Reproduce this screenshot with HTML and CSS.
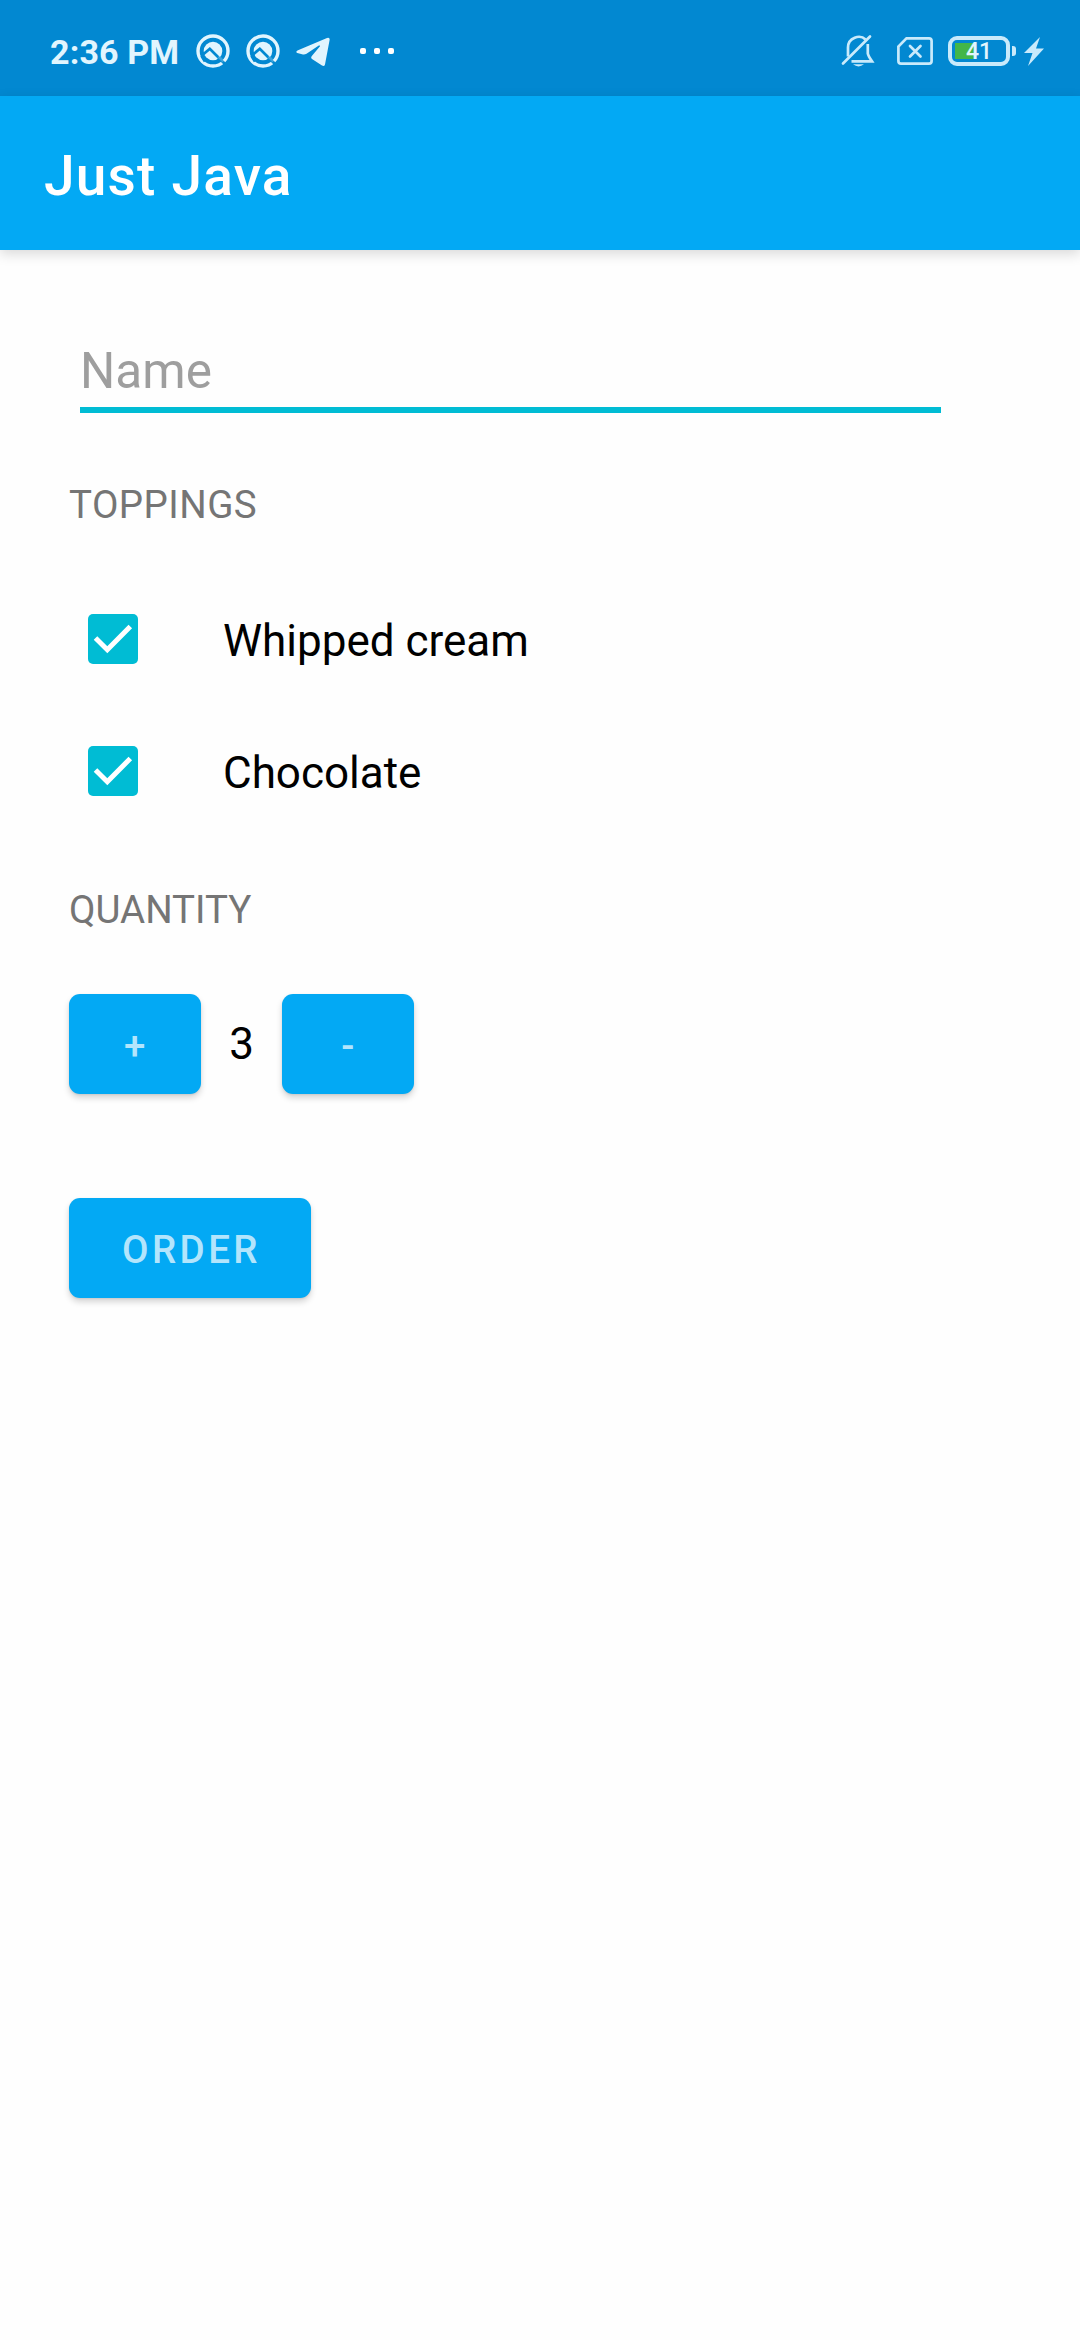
FILE: index.html
```html
<!DOCTYPE html>
<html lang="en">
<head>
<meta charset="utf-8">
<title>Just Java</title>
<link rel="stylesheet" href="styles.css">
</head>
<body>
<svg class="defs" aria-hidden="true">
  <symbol id="q" viewBox="0 0 34 34">
    <circle cx="17" cy="17" r="15" fill="none" stroke="currentColor" stroke-width="3.400"/>
    <circle cx="17" cy="17" r="9.300" fill="currentColor"/>
    <path d="M5.500 21.800 13.800 14.800 30.500 31.500M9 27.500 5.500 21.800" fill="none" stroke="#0288d1" stroke-width="2.800"/>
    <path d="M22.500 22.500 27.500 27.500" stroke="currentColor" stroke-width="2.600" opacity=".25"/>
  </symbol>
  <symbol id="check" viewBox="0 0 50 50">
    <path d="M7.500 24 19.300 35.700 42.300 12.500" fill="none" stroke="#fff" stroke-width="5"/>
  </symbol>
</svg>
<header class="status">
  <span class="time">2:36 PM</span>
  <svg class="q"><use href="#q"/></svg>
  <svg class="q"><use href="#q"/></svg>
  <svg class="plane" viewBox="0 0 34 30"><path d="M2 13.300 31 1Q34 0 33.600 3L29 27.400Q28.300 30 26 28.600L16 22Q14.300 20.500 16 18.700L24 9.200Q24.300 8 22.800 8.600L10.500 16.700Q8.500 17.900 6 17.200L1.300 16Q-1 14.800 2 13.300Z" fill="currentColor"/></svg>
  <span class="dots"><i></i><i></i><i></i></span>
  <span class="space"></span>
  <svg class="bell" viewBox="0 0 34 34" fill="none" stroke="currentColor" stroke-width="2.700">
    <path d="M7 22.500V13.500C7 3.500 19 0 24.500 5.500M26.800 10V19.500Q27.300 22 31 27.300H10.500"/>
    <path d="M2 29.500 29 2.500" stroke-linecap="round"/>
    <path d="M12 30.300H23Q17.500 34.500 12 30.300Z" fill="currentColor" stroke="none"/>
  </svg>
  <svg class="sim" viewBox="0 0 36 28" fill="none" stroke="currentColor" stroke-width="2.700">
    <path d="M9.500 1.400H32Q34.600 1.400 34.600 4V24Q34.600 26.600 32 26.600H4Q1.400 26.600 1.400 24V9.500Z"/>
    <path d="M13 9 23.500 19.500M23.500 9 13 19.500" stroke-linecap="round"/>
  </svg>
  <span class="battery"><b>41</b></span><span class="cap"></span>
  <svg class="bolt" viewBox="0 0 20 29"><path d="M16 0 0 16H8.500L4 29 20 11.500H12Z" fill="currentColor"/></svg>
</header>
<div class="toolbar"><h1>Just Java</h1></div>
<main>
  <input class="name" type="text" placeholder="Name" aria-label="Name">
  <h2 class="toppings">TOPPINGS</h2>
  <label class="option"><svg><use href="#check"/></svg><span>Whipped cream</span></label>
  <label class="option"><svg><use href="#check"/></svg><span>Chocolate</span></label>
  <h2 class="quantity">QUANTITY</h2>
  <div class="stepper">
    <button type="button">+</button>
    <span class="count">3</span>
    <button type="button">-</button>
  </div>
  <button class="order" type="button">ORDER</button>
</main>
</body>
</html>
```
FILE: styles.css
```css
* { box-sizing: border-box; }
body { margin: 0; min-height: 2340px; background: #fefefe; font-family: Roboto, sans-serif; color: #000; }
.defs { position: absolute; width: 0; height: 0; }
svg { display: block; flex: none; }

.status { height: 96px; padding: 6px 36px 0 50px; display: flex; align-items: center; background: #0288d1; color: #e1f5fe; }
.time { width: 146px; padding-top: 1px; font-size: 34px; line-height: 40px; font-weight: 700; letter-spacing: .15px; white-space: nowrap; }
.q { width: 34px; height: 34px; margin-right: 16px; }
.plane { width: 34px; height: 30px; margin-top: 2px; }
.dots { display: flex; gap: 8px; margin-left: 30px; }
.dots i { width: 6px; height: 6px; border-radius: 2px; background: #fff; }
.space { flex: 1; }
.bell { width: 34px; height: 34px; margin-right: 22px; color: #c9eafb; }
.sim { width: 36px; height: 28px; margin-right: 15px; color: #c9eafb; }
.battery { width: 62px; height: 30px; border: 4px solid #c9eafb; border-radius: 9px; padding: 2px 3px 0; display: flex; justify-content: center; align-items: center; background: linear-gradient(#43b649, #43b649) 3px center / 19px 16px no-repeat; }
.battery b { font-size: 23px; line-height: 22px; font-weight: 500; }
.cap { width: 4px; height: 10px; margin: 0 8px 0 2px; border-radius: 0 3px 3px 0; background: #c9eafb; }
.bolt { width: 20px; height: 29px; color: #c9eafb; }

.toolbar { height: 154px; padding: 6px 44px 0; display: flex; align-items: center; background: #03a9f4; box-shadow: 0 4px 12px rgba(0, 0, 0, .15); }
h1 { margin: 0; font-size: 55px; line-height: 64px; font-weight: 500; letter-spacing: 1.2px; color: #fff; }

main { padding: 91px 69px 0; display: flex; flex-direction: column; align-items: flex-start; }
.name { width: 861px; height: 72px; margin: 0 0 0 11px; padding: 0 0 6px; border: 0; border-bottom: 6px solid #00bcd4; outline: 0; background: none; font: 49.5px/60px Roboto, sans-serif; }
.name::placeholder { color: #9e9e9e; opacity: 1; }
h2 { margin: 0; font-size: 38.5px; line-height: 42px; font-weight: 400; color: #757575; }
.toppings { margin: 71px 0 47px; letter-spacing: .45px; }
.option { height: 132px; padding-left: 19px; display: flex; align-items: center; gap: 85px; font-size: 44px; line-height: 52px; }
.option svg { width: 50px; height: 50px; border-radius: 5px; background: #00bcd4; }
.option span { padding-top: 4px; }
.quantity { margin: 52px 0 63px; }
.stepper { display: flex; align-items: center; }
button { width: 132px; height: 100px; margin: 0; padding: 3px 0 0 3px; border: 0; border-radius: 11px; background: #03a9f4; color: #b3e5fc; box-shadow: 0 4px 6px rgba(0, 0, 0, .16), 0 1px 2px rgba(0, 0, 0, .08); font: 500 38.5px/46px Roboto, sans-serif; letter-spacing: .0893em; }
.count { width: 81px; text-align: center; font-size: 44px; line-height: 52px; }
.order { width: 242px; margin-top: 104px; }
```
